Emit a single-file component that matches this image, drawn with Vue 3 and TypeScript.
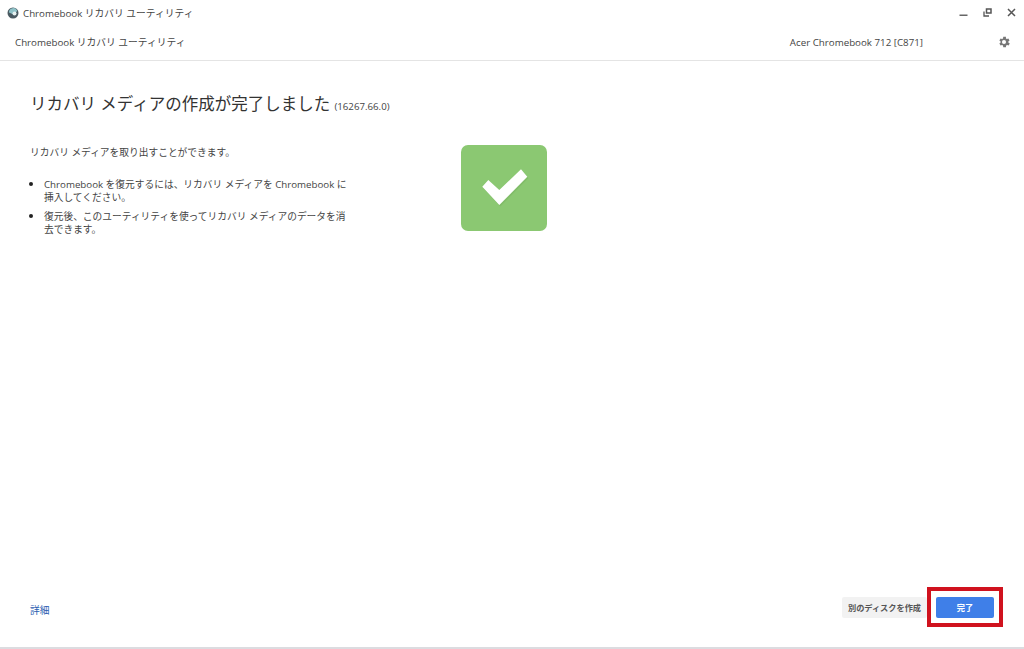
<script setup lang="ts">
const bullets: string[] = [
  'Chromebook を復元するには、リカバリ メディアを Chromebook に挿入してください。',
  '復元後、このユーティリティを使ってリカバリ メディアのデータを消去できます。',
]
</script>

<template>
  <div class="app">
    <div class="titlebar">
      <svg class="logo" width="12" height="12" viewBox="0 0 12 12">
        <circle cx="6" cy="6" r="5.5" fill="#4a5a62" />
        <path d="M2 5.500 A4.200 4.200 0 0 1 10.200 4 L6.500 7.500 Z" fill="#8fc3c9" />
        <circle cx="7.500" cy="6.500" r="2" fill="#e6f1f1" />
      </svg>
      <span class="wintitle">Chromebook リカバリ ユーティリティ</span>
      <div class="winctl">
        <svg width="9" height="9" viewBox="0 0 9 9"><rect x="0.500" y="6.500" width="8" height="1.500" fill="#666" /></svg>
        <svg width="9" height="9" viewBox="0 0 9 9">
          <path d="M3.500 1h4.500v4H3.500z" fill="none" stroke="#555" stroke-width="1.500" />
          <path d="M1 3.500V8h5" fill="none" stroke="#555" stroke-width="1.300" />
        </svg>
        <svg width="9" height="9" viewBox="0 0 9 9"><path d="M1 1l7 7M8 1l-7 7" stroke="#555" stroke-width="1.500" /></svg>
      </div>
    </div>
    <header class="header">
      <span class="apptitle">Chromebook リカバリ ユーティリティ</span>
      <span class="model">Acer Chromebook 712 [C871]</span>
      <svg class="gear" width="14" height="14" viewBox="0 0 24 24">
        <path fill="#777" fill-rule="evenodd" d="M19.400 13a7.500 7.500 0 0 0 0-2l2.100-1.600-2-3.500-2.500 1a7.500 7.500 0 0 0-1.700-1L15.300 3.200h-4.600l-.4 2.700a7.500 7.500 0 0 0-1.700 1l-2.500-1-2 3.500L6.200 11a7.500 7.500 0 0 0 0 2l-2.100 1.600 2 3.500 2.500-1a7.500 7.500 0 0 0 1.700 1l.4 2.700h4.600l.4-2.700a7.500 7.500 0 0 0 1.700-1l2.500 1 2-3.500zM12 15.500a3.500 3.500 0 1 1 0-7 3.500 3.500 0 0 1 0 7z" />
      </svg>
    </header>
    <main class="main">
      <h1 class="heading">リカバリ メディアの作成が完了しました <small class="version">(16267.66.0)</small></h1>
      <div class="content">
        <div class="text">
          <p class="lead">リカバリ メディアを取り出すことができます。</p>
          <ul class="list">
            <li v-for="b in bullets" :key="b">{{ b }}</li>
          </ul>
        </div>
        <div class="badge">
          <svg width="86" height="86" viewBox="0 0 86 86">
            <path d="M22.300 43.200 L28.300 36.500 L39.300 46.500 L61 25.800 L67.300 33.200 L39.300 61.500 Z" fill="#6fa95a" opacity="0.35" />
            <path d="M21.300 41.700 L27.300 35 L38.300 45 L60 24.300 L66.300 31.700 L38.300 60 Z" fill="#fff" />
          </svg>
        </div>
      </div>
    </main>
    <footer class="footer">
      <a class="more">詳細</a>
      <div class="actions">
        <button class="btn secondary">別のディスクを作成</button>
        <div class="highlight">
          <button class="btn primary">完了</button>
        </div>
      </div>
    </footer>
  </div>
</template>

<style>
html, body { margin: 0; background: #fff; }
</style>

<style scoped>
.app {
  width: 1024px;
  height: 649px;
  display: flex;
  flex-direction: column;
  box-sizing: border-box;
  border-bottom: 2px solid #dcdce0;
  font-family: "Open Sans", "Noto Sans CJK JP", sans-serif;
  color: #333;
  overflow: hidden;
  background: #fff;
}
.titlebar {
  height: 25px;
  flex: none;
  display: flex;
  align-items: center;
  padding: 0 7px;
  gap: 4px;
}
.wintitle { font-size: 9.75px; color: #444; }
.winctl {
  margin-left: auto;
  display: flex;
  gap: 15px;
  padding-right: 1px;
  align-items: center;
}
.header {
  height: 36px;
  flex: none;
  box-sizing: border-box;
  border-bottom: 1px solid #e4e4e4;
  display: flex;
  align-items: center;
  padding: 0 13px 1px 15px;
  font-size: 9.75px;
  color: #444;
}
.model { margin-left: auto; margin-right: 74px; }
.main {
  flex: 1;
  padding: 0 30px;
}
.heading {
  margin: 31px 0 0;
  font-size: 16.5px;
  font-weight: 400;
  line-height: 24px;
  color: #333;
}
.version { font-size: 9.7px; color: #444; }
.content {
  display: flex;
  margin-top: 26px;
}
.text {
  width: 318px;
  font-size: 9.72px;
  line-height: 13px;
  color: #444;
}
.lead { margin: 1px 0 0; }
.list {
  margin: 18px 0 0;
  padding: 0 0 0 14px;
}
.list li { margin-bottom: 5px; }
.list li::marker { font-size: 12px; color: #222; }
.badge {
  width: 86px;
  height: 86px;
  margin-left: 113px;
  border-radius: 7px;
  background: #8bc872;
  display: flex;
  align-items: center;
  justify-content: center;
}
.footer {
  height: 60px;
  flex: none;
  display: flex;
  align-items: flex-start;
  justify-content: space-between;
  padding: 0 21px 0 30px;
}
.more {
  font-size: 9.75px;
  color: #2a5db0;
  margin-top: 16px;
}
.actions {
  display: flex;
  align-items: center;
}
.btn {
  font-family: inherit;
  font-size: 8.2px;
  font-weight: 700;
  border-radius: 2px;
  height: 21px;
  box-sizing: border-box;
  cursor: pointer;
}
.secondary {
  width: 85px;
  padding: 0;
  background: #f2f2f2;
  border: none;
  color: #555;
}
.primary {
  width: 58px;
  background: #3f7fe8;
  border: none;
  color: #fff;
}
.highlight {
  width: 76px;
  height: 40px;
  box-sizing: border-box;
  border: 4px solid #d0121e;
  display: flex;
  align-items: center;
  justify-content: center;
}
</style>
